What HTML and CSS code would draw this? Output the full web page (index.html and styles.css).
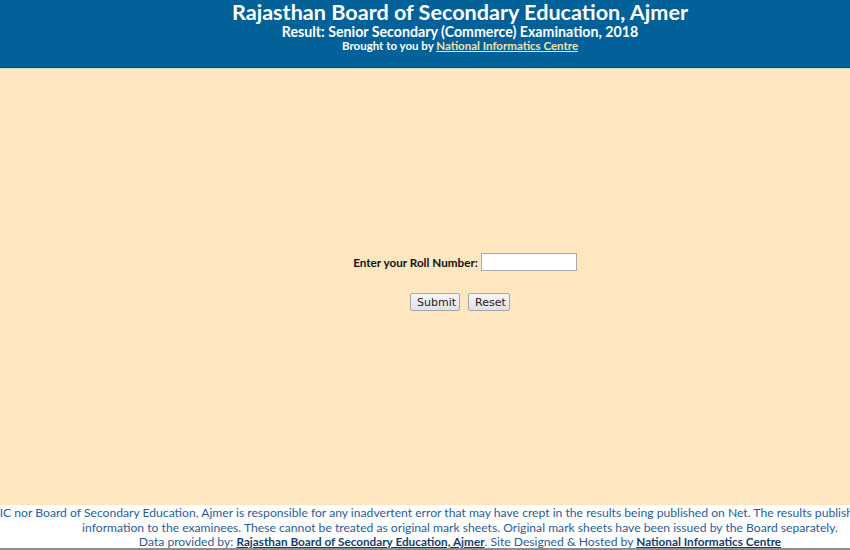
FILE: index.html
```html
<!DOCTYPE html>
<html>
<head>
<meta charset="utf-8">
<link rel="stylesheet" href="styles.css">
</head>
<body>
<div class="page">
  <header class="header">
    <h1 class="title">Rajasthan Board of Secondary Education, Ajmer</h1>
    <div class="subtitle">Result: Senior Secondary (Commerce) Examination, 2018</div>
    <div class="brought">Brought to you by <a class="hlink" href="#">National Informatics Centre</a></div>
  </header>
  <main class="main">
    <form class="form">
      <div class="row">
        <label class="label" for="roll">Enter your Roll Number:</label>
        <input class="input" id="roll" type="text">
      </div>
      <div class="buttons">
        <button class="btn btn-submit" type="button">Submit</button>
        <button class="btn btn-reset" type="button">Reset</button>
      </div>
    </form>
  </main>
  <footer class="footer">
    <div class="fline fline-first">Neither NIC nor Board of Secondary Education, Ajmer is responsible for any inadvertent error that may have crept in the results being published on Net. The results published on net are for Immediate</div>
    <div class="fline">information to the examinees. These cannot be treated as original mark sheets. Original mark sheets have been issued by the Board separately.</div>
    <div class="fline">Data provided by: <a class="flink" href="#">Rajasthan Board of Secondary Education, Ajmer</a>. Site Designed &amp; Hosted by <a class="flink" href="#">National Informatics Centre</a></div>
  </footer>
</div>
</body>
</html>
```
FILE: styles.css
```css
html, body {
  margin: 0;
  padding: 0;
  overflow: hidden;
  background: #ffffff;
}
body {
  font-family: Lato, "Open Sans", sans-serif;
}
.page {
  width: 920px;
  height: 550px;
  display: flex;
  flex-direction: column;
}
.header {
  height: 68px;
  background: #03619a;
  border-bottom: 1px solid #0b4a6e;
  box-shadow: 0 1px 0 #c9dcc6;
  display: flex;
  flex-direction: column;
  align-items: center;
  color: #ffffff;
  padding-top: 0;
  box-sizing: border-box;
}
.title {
  margin: 0;
  font-size: 21.6px;
  font-weight: 700;
  line-height: 24px;
}
.subtitle {
  font-size: 14.2px;
  font-weight: 700;
  line-height: 15px;
}
.brought {
  font-size: 11.5px;
  font-weight: 700;
  line-height: 14px;
}
.hlink {
  color: #f3e3a8;
  text-decoration: underline;
}
.main {
  flex: 1;
  background: #fde6c0;
  margin-top: 1px;
  display: flex;
  flex-direction: column;
  align-items: center;
  padding-top: 184px;
  box-sizing: border-box;
}
.form {
  display: flex;
  flex-direction: column;
  align-items: center;
  gap: 22px;
}
.row {
  display: flex;
  align-items: center;
  gap: 3px;
  padding-left: 10px;
}
.label {
  font-size: 11.7px;
  font-weight: 700;
  color: #111111;
}
.input {
  width: 96px;
  height: 18px;
  box-sizing: border-box;
  border: 1px solid #a9a9a9;
  background: #ffffff;
  padding: 0;
  margin: 0;
}
.buttons {
  display: flex;
  gap: 8px;
}
.btn {
  height: 18px;
  box-sizing: border-box;
  font-family: "DejaVu Sans", sans-serif;
  font-size: 11px;
  padding: 0 6px;
  border: 1px solid #a6a6a6;
  border-radius: 2px;
  background: linear-gradient(#f6f6f6, #e2e2e2);
  color: #222222;
}
.btn-submit { width: 50px; }
.btn-reset { width: 42px; }
.footer {
  height: 42px;
  display: flex;
  flex-direction: column;
  align-items: center;
  padding-top: 1px;
  border-bottom: 2px solid #8e8e8e;
}
.fline {
  white-space: nowrap;
  font-size: 12.15px;
  line-height: 14.5px;
  color: #2b5c9a;
}
.fline-first {
  padding-left: 28px;
}
.flink {
  color: #133e73;
  font-weight: 700;
  font-size: 11.75px;
  text-decoration: underline;
}
```
